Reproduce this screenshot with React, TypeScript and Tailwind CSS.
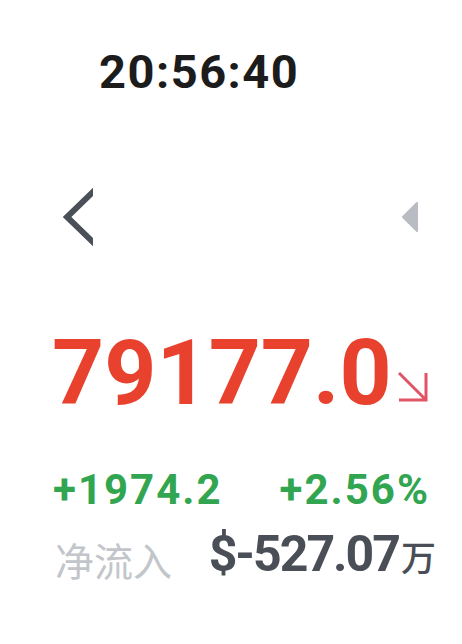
export default function App() {
  return (
    <div className="w-[462px] h-[644px] bg-white font-['Roboto','Noto_Sans_CJK_SC',sans-serif] overflow-hidden">
      <div className="pt-[48px] pl-[99px] text-[47px] leading-none font-bold tracking-[1.5px] text-[#1c1c1c]">
        20:56:40
      </div>

      <div className="mt-[91px] flex items-center justify-between pl-[63px] pr-[44px]">
        <svg width="30" height="62" viewBox="0 0 30 62">
          <polyline points="34,2 4,31 34,60" fill="none" stroke="#4b5058" strokeWidth="6" />
        </svg>
        <svg width="16" height="30" viewBox="0 0 16 30">
          <polygon points="15,1 1,15 15,29" fill="#b9bdc3" stroke="#b9bdc3" strokeWidth="2" strokeLinejoin="round" />
        </svg>
      </div>

      <div className="mt-[80px] flex items-end pl-[52px]">
        <span className="text-[91px] leading-none font-bold text-[#e8422f]">79177.0</span>
        <svg className="ml-[5px] mb-[17px]" width="32" height="32" viewBox="0 0 32 32">
          <path d="M2 3 L29 30 M29 3 V30 H2" fill="none" stroke="#e05466" strokeWidth="3" />
        </svg>
      </div>

      <div className="mt-[50px] flex justify-between pl-[53px] pr-[32px] text-[42px] leading-none font-bold tracking-[2px] text-[#31a550]">
        <span>+1974.2</span>
        <span>+2.56%</span>
      </div>

      <div className="mt-[18px] flex items-end justify-between pl-[55px] pr-[26px]">
        <span className="text-[39px] leading-none text-[#c2c5c9] font-['Noto_Sans_CJK_SC',sans-serif]">净流入</span>
        <span className="leading-none font-bold text-[#4a4e56]">
          <span className="text-[50px] tracking-[-2px]">$-527.07</span>
          <span className="ml-[2px] text-[35px] font-medium font-['Noto_Sans_CJK_SC',sans-serif]">万</span>
        </span>
      </div>
    </div>
  );
}
